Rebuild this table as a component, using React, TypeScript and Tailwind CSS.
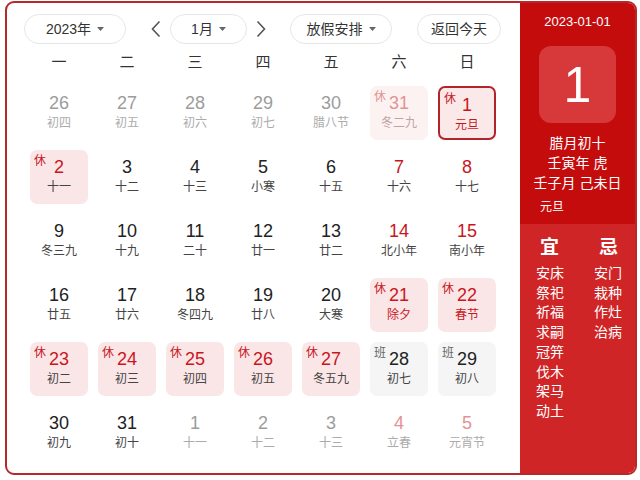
import React from "react"

type Day = {
  n: number
  l: string
  other?: boolean // day of another month
  red?: boolean // red number
  lred?: boolean // red lunar text
  tag?: "休" | "班"
  sel?: boolean
}

const rows: Day[][] = [
  [
    { n: 26, l: "初四", other: true },
    { n: 27, l: "初五", other: true },
    { n: 28, l: "初六", other: true },
    { n: 29, l: "初七", other: true },
    { n: 30, l: "腊八节", other: true },
    { n: 31, l: "冬二九", other: true, red: true, tag: "休" },
    { n: 1, l: "元旦", red: true, lred: true, tag: "休", sel: true },
  ],
  [
    { n: 2, l: "十一", red: true, tag: "休" },
    { n: 3, l: "十二" },
    { n: 4, l: "十三" },
    { n: 5, l: "小寒" },
    { n: 6, l: "十五" },
    { n: 7, l: "十六", red: true },
    { n: 8, l: "十七", red: true },
  ],
  [
    { n: 9, l: "冬三九" },
    { n: 10, l: "十九" },
    { n: 11, l: "二十" },
    { n: 12, l: "廿一" },
    { n: 13, l: "廿二" },
    { n: 14, l: "北小年", red: true },
    { n: 15, l: "南小年", red: true },
  ],
  [
    { n: 16, l: "廿五" },
    { n: 17, l: "廿六" },
    { n: 18, l: "冬四九" },
    { n: 19, l: "廿八" },
    { n: 20, l: "大寒" },
    { n: 21, l: "除夕", red: true, lred: true, tag: "休" },
    { n: 22, l: "春节", red: true, lred: true, tag: "休" },
  ],
  [
    { n: 23, l: "初二", red: true, tag: "休" },
    { n: 24, l: "初三", red: true, tag: "休" },
    { n: 25, l: "初四", red: true, tag: "休" },
    { n: 26, l: "初五", red: true, tag: "休" },
    { n: 27, l: "冬五九", red: true, tag: "休" },
    { n: 28, l: "初七", tag: "班" },
    { n: 29, l: "初八", tag: "班" },
  ],
  [
    { n: 30, l: "初九" },
    { n: 31, l: "初十" },
    { n: 1, l: "十一", other: true },
    { n: 2, l: "十二", other: true },
    { n: 3, l: "十三", other: true },
    { n: 4, l: "立春", other: true, red: true },
    { n: 5, l: "元宵节", other: true, red: true },
  ],
]

const week = ["一", "二", "三", "四", "五", "六", "日"]
const yi = ["安床", "祭祀", "祈福", "求嗣", "冠笄", "伐木", "架马", "动土"]
const ji = ["安门", "栽种", "作灶", "治病"]

function Caret() {
  return (
    <svg width="7" height="4" viewBox="0 0 7 4" className="ml-[6px]">
      <path d="M0 0 L7 0 L3.5 4 Z" fill="#666" />
    </svg>
  )
}

function Chevron({ dir }: { dir: "l" | "r" }) {
  return (
    <svg width="10" height="18" viewBox="0 0 10 18">
      <path
        d={dir === "l" ? "M8.5 1.5 L1.5 9 L8.5 16.5" : "M1.5 1.5 L8.5 9 L1.5 16.5"}
        fill="none"
        stroke="#555"
        strokeWidth="1.6"
      />
    </svg>
  )
}

function Pill({ w, children }: { w: string; children: React.ReactNode }) {
  return (
    <div
      className={`${w} h-[30px] flex items-center justify-center rounded-full border border-[#e6e6e6] text-[14px] text-[#333]`}
    >
      {children}
    </div>
  )
}

function Cell({ d }: { d: Day }) {
  let box = ""
  let num = "text-[#222]"
  let lun = "text-[#444]"
  let tag = "text-[#c8161d]"

  if (d.other) {
    num = d.red ? "text-[#e39393]" : "text-[#9c9c9c]"
    lun = "text-[#ababab]"
    if (d.tag) {
      box = "bg-[#fdf2f2]"
      lun = "text-[#bfa3a3]"
      tag = "text-[#e39393]"
    }
  } else {
    if (d.red) num = "text-[#c8161d]"
    if (d.lred) lun = "text-[#c8161d]"
    if (d.tag === "休") box = "bg-[#fbe6e7]"
    if (d.tag === "班") {
      box = "bg-[#f5f5f5]"
      tag = "text-[#666]"
    }
  }
  if (d.sel) box = "bg-[#fbe9ea] border-2 border-[#b3242a]"

  return (
    <div className="h-[64px] px-[5px] py-[5px]">
      <div className={`relative h-[54px] rounded-[7px] flex flex-col items-center ${box}`}>
        {d.tag && (
          <span className={`absolute left-[4px] top-[4px] text-[12px] leading-[14px] ${tag}`}>
            {d.tag}
          </span>
        )}
        <span className={`mt-[7px] text-[18px] leading-[20px] ${num}`}>{d.n}</span>
        <span className={`mt-[1px] text-[12px] leading-[18px] ${lun}`}>{d.l}</span>
      </div>
    </div>
  )
}

export default function App() {
  return (
    <div
      className="w-[640px] h-[480px] bg-white pl-[5px] pt-[1px]"
      style={{ fontFamily: '"Liberation Sans", "Noto Sans CJK SC", sans-serif' }}
    >
      <div className="w-[632px] h-[474px] border-2 border-[#b8272c] rounded-[9px] overflow-hidden flex">
        {/* Calendar */}
        <div className="w-[513px] pl-[17px] pt-[11px]">
          <div className="flex items-center h-[30px]">
            <Pill w="w-[102px]">
              2023年
              <Caret />
            </Pill>
            <div className="ml-[25px] mr-[9px] flex items-center">
              <Chevron dir="l" />
            </div>
            <Pill w="w-[77px]">
              1月
              <Caret />
            </Pill>
            <div className="ml-[9px] mr-[24px] flex items-center">
              <Chevron dir="r" />
            </div>
            <Pill w="w-[102px]">
              放假安排
              <Caret />
            </Pill>
            <div className="ml-[25px]">
              <Pill w="w-[84px]">返回今天</Pill>
            </div>
          </div>

          <div className="ml-[1px] mt-[4px] grid grid-cols-[repeat(7,68px)] h-[28px] items-center">
            {week.map((w) => (
              <div key={w} className="text-center text-[15px] text-[#333]">
                {w}
              </div>
            ))}
          </div>

          <div className="ml-[1px] mt-[5px] grid grid-cols-[repeat(7,68px)]">
            {rows.flat().map((d, i) => (
              <Cell key={i} d={d} />
            ))}
          </div>
        </div>

        {/* Side panel */}
        <div className="flex-1 flex flex-col text-white">
          <div className="h-[221px] bg-[#c50c0c] flex flex-col items-center">
            <div className="mt-[11px] text-[13px] leading-[16px]">2023-01-01</div>
            <div className="mt-[16px] w-[77px] h-[77px] rounded-[12px] bg-[#d7393b] flex items-center justify-center text-[50px] leading-none">
              1
            </div>
            <div className="mt-[10px] text-[14px] leading-[20px] text-center">
              <div>腊月初十</div>
              <div>壬寅年 虎</div>
              <div>壬子月 己未日</div>
            </div>
            <div className="self-start ml-[20px] mt-[6px] text-[12px] leading-[16px]">元旦</div>
          </div>
          <div className="flex-1 bg-[#cf2526] flex pl-[16px] pt-[13px]">
            <div className="w-[58px] flex flex-col">
              <div className="ml-[4px] text-[19px] font-bold leading-[22px] mb-[5px]">宜</div>
              {yi.map((t) => (
                <div key={t} className="text-[14px] leading-[19.7px]">
                  {t}
                </div>
              ))}
            </div>
            <div className="flex flex-col">
              <div className="ml-[5px] text-[19px] font-bold leading-[22px] mb-[5px]">忌</div>
              {ji.map((t) => (
                <div key={t} className="text-[14px] leading-[19.7px]">
                  {t}
                </div>
              ))}
            </div>
          </div>
        </div>
      </div>
    </div>
  )
}
